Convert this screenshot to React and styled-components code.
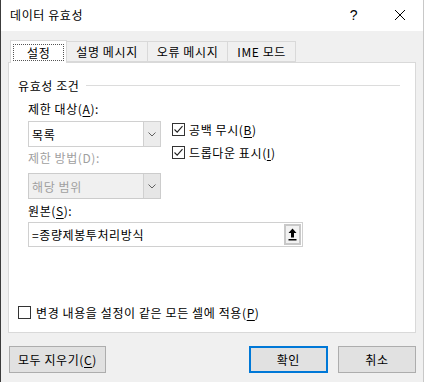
import React from 'react'
import styled, { createGlobalStyle } from 'styled-components'

const GlobalStyle = createGlobalStyle`
  html, body {
    margin: 0;
    padding: 0;
    background: #f0f0f0;
  }
  body {
    font-family: "Noto Sans CJK KR", "Noto Sans", sans-serif;
    font-size: 12px;
    letter-spacing: 0.6px;
    color: #000;
  }
`

const Window = styled.div`
  width: 424px;
  height: 382px;
  box-sizing: border-box;
  border-left: 1px solid #3c3c3c;
  border-right: 1px solid #c8c8c8;
  background: #f0f0f0;
  display: flex;
  flex-direction: column;
`

const TitleBar = styled.div`
  height: 31px;
  background: #fff;
  display: flex;
  align-items: center;
  padding-left: 9px;
`

const Title = styled.div`
  flex: 1;
  font-size: 12px;
  margin-top: -3px;
`

const TitleButton = styled.div`
  width: 46px;
  height: 31px;
  display: flex;
  align-items: center;
  justify-content: center;
  font-family: "Liberation Sans", sans-serif;
  font-size: 14px;
  margin-top: -2px;
`

const Body = styled.div`
  flex: 1;
  display: flex;
  flex-direction: column;
  padding: 9px 7px 0 7px;
`

const Tabs = styled.div`
  display: flex;
  height: 22px;
  align-items: flex-end;
  padding-left: 2px;
  position: relative;
  z-index: 1;
`

const Tab = styled.div`
  box-sizing: border-box;
  height: ${p => (p.$active ? '23px' : '21px')};
  padding: ${p => (p.$active ? '2px' : '0 9px')};
  background: ${p => (p.$active ? '#fff' : '#f0f0f0')};
  border: 1px solid #d9d9d9;
  border-bottom: ${p => (p.$active ? 'none' : '1px solid #d9d9d9')};
  margin-left: ${p => (p.$first ? '0' : '-1px')};
  margin-bottom: ${p => (p.$active ? '-1px' : '0')};
  display: flex;
  align-items: center;
  white-space: nowrap;
  color: #000;
`

const Focus = styled.div`
  border: 1px dotted #555;
  height: 17px;
  box-sizing: border-box;
  padding: 0 13px;
  display: flex;
  align-items: center;
`

const Panel = styled.div`
  box-sizing: border-box;
  width: 408px;
  height: 271px;
  background: #fff;
  border: 1px solid #d9d9d9;
  padding: 14px 9px 0 9px;
  display: flex;
  flex-direction: column;
`

const GroupHeader = styled.div`
  display: flex;
  align-items: center;
  gap: 6px;
  height: 16px;
  padding-right: 6px;
`

const GroupLine = styled.div`
  flex: 1;
  height: 1px;
  background: #dcdcdc;
  margin-top: 1px;
`

const Group = styled.div`
  padding-left: 10px;
  display: flex;
  flex-direction: column;
`

const Label = styled.div`
  height: 16px;
  display: flex;
  align-items: center;
  color: ${p => (p.$disabled ? '#a0a0a0' : '#000')};
  margin-top: ${p => p.$mt || 0}px;
`

const Row = styled.div`
  display: flex;
  gap: 11px;
`

const Column = styled.div`
  display: flex;
  flex-direction: column;
`

const Combo = styled.div`
  box-sizing: border-box;
  width: 133px;
  height: 26px;
  border: 1px solid ${p => (p.$disabled ? '#cccccc' : '#d0d0d0')};
  background: ${p => (p.$disabled ? '#f0f0f0' : '#fff')};
  display: flex;
  margin-top: ${p => p.$mt || 0}px;
  color: ${p => (p.$disabled ? '#a0a0a0' : '#000')};
`

const ComboText = styled.div`
  flex: 1;
  display: flex;
  align-items: center;
  padding-left: 3px;
`

const ComboArrow = styled.div`
  width: 16px;
  border-left: 1px solid #d0d0d0;
  background: ${p => (p.$disabled ? '#e6e6e6' : '#ececec')};
  display: flex;
  align-items: center;
  justify-content: center;
`

const Checks = styled.div`
  display: flex;
  flex-direction: column;
  gap: 9px;
  padding-top: 6px;
`

const CheckRow = styled.div`
  display: flex;
  align-items: center;
  gap: 4px;
  height: 14px;
`

const Box = styled.div`
  width: 13px;
  height: 13px;
  box-sizing: border-box;
  border: 1px solid #333;
  background: #fff;
  display: flex;
  align-items: center;
  justify-content: center;
`

const SourceInput = styled.div`
  box-sizing: border-box;
  width: 275px;
  height: 25px;
  border: 1px solid #d0d0d0;
  display: flex;
  margin-top: 4px;
`

const SourceText = styled.div`
  flex: 1;
  display: flex;
  align-items: center;
  padding-left: 3px;
`

const PickButton = styled.div`
  width: 17px;
  margin: 1px;
  box-sizing: border-box;
  border: 2px solid #c8c8c8;
  background: #f2f2f2;
  display: flex;
  align-items: center;
  justify-content: center;
`

const Spacer = styled.div`
  flex: 1;
`

const ApplyRow = styled(CheckRow)`
  margin-bottom: 13px;
  gap: 5px;
`

const Footer = styled.div`
  display: flex;
  align-items: center;
  padding: 13px 0 0 1px;
  gap: 10px;
`

const Button = styled.div`
  box-sizing: border-box;
  width: ${p => p.$w}px;
  height: 27px;
  background: #e1e1e1;
  border: ${p => (p.$default ? '2px solid #0078d7' : '1px solid #adadad')};
  display: flex;
  align-items: center;
  justify-content: center;
  margin-left: ${p => p.$ml || 0}px;
`

const U = styled.span`
  text-decoration: underline;
  text-underline-offset: 2px;
`

const Check = () => (
  <svg width="11" height="11" viewBox="0 0 11 11">
    <path d="M1.5 5.5 L4.2 8.2 L9.5 2.2" fill="none" stroke="#222" strokeWidth="1.1" />
  </svg>
)

const Chevron = () => (
  <svg width="8" height="5" viewBox="0 0 8 5">
    <path d="M0.5 0.5 L4 4 L7.5 0.5" fill="none" stroke="#606060" strokeWidth="1" />
  </svg>
)

const UploadArrow = () => (
  <svg width="9" height="13" viewBox="0 0 9 13">
    <path d="M4.5 0.5 L8.5 5 L6 5 L6 9.5 L3 9.5 L3 5 L0.5 5 Z" fill="#000" />
    <rect x="0.5" y="11" width="8" height="1.5" fill="#000" />
  </svg>
)

export default function App() {
  return (
    <>
      <GlobalStyle />
      <Window>
        <TitleBar>
          <Title>데이터 유효성</Title>
          <TitleButton>?</TitleButton>
          <TitleButton>
            <svg width="12" height="12" viewBox="0 0 12 12">
              <path d="M1 1 L11 11 M11 1 L1 11" stroke="#000" strokeWidth="1" />
            </svg>
          </TitleButton>
        </TitleBar>
        <Body>
          <Tabs>
            <Tab $active $first><Focus>설정</Focus></Tab>
            <Tab>설명 메시지</Tab>
            <Tab>오류 메시지</Tab>
            <Tab>IME 모드</Tab>
          </Tabs>
          <Panel>
            <GroupHeader>
              <span>유효성 조건</span>
              <GroupLine />
            </GroupHeader>
            <Group>
              <Label $mt={7}>제한 대상(<U>A</U>):</Label>
              <Row>
                <Column>
                  <Combo $mt={5}>
                    <ComboText>목록</ComboText>
                    <ComboArrow><Chevron /></ComboArrow>
                  </Combo>
                  <Label $disabled $mt={2}>제한 방법(D):</Label>
                  <Combo $disabled $mt={8}>
                    <ComboText>해당 범위</ComboText>
                    <ComboArrow $disabled><Chevron /></ComboArrow>
                  </Combo>
                </Column>
                <Checks>
                  <CheckRow>
                    <Box><Check /></Box>
                    <span>공백 무시(<U>B</U>)</span>
                  </CheckRow>
                  <CheckRow>
                    <Box><Check /></Box>
                    <span>드롭다운 표시(<U>I</U>)</span>
                  </CheckRow>
                </Checks>
              </Row>
              <Label $mt={3}>원본(<U>S</U>):</Label>
              <SourceInput>
                <SourceText>=종량제봉투처리방식</SourceText>
                <PickButton><UploadArrow /></PickButton>
              </SourceInput>
            </Group>
            <Spacer />
            <ApplyRow>
              <Box />
              <span>변경 내용을 설정이 같은 모든 셀에 적용(<U>P</U>)</span>
            </ApplyRow>
          </Panel>
          <Footer>
            <Button $w={98}>모두 지우기(<U>C</U>)</Button>
            <Button $w={80} $default $ml={133}>확인</Button>
            <Button $w={79}>취소</Button>
          </Footer>
        </Body>
      </Window>
    </>
  )
}
